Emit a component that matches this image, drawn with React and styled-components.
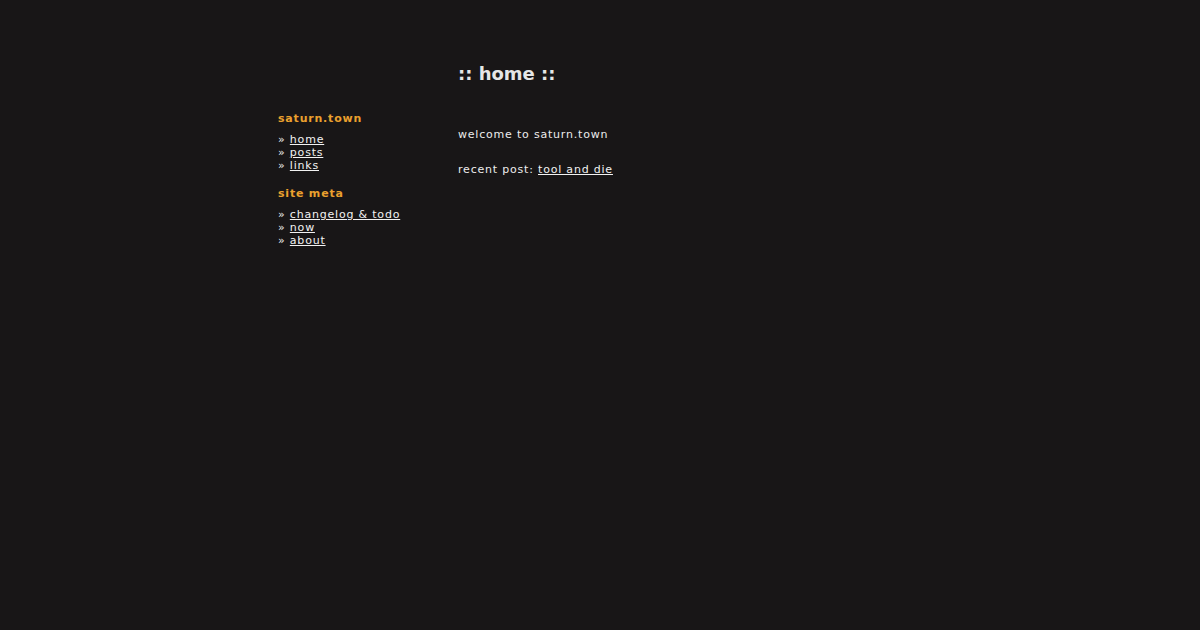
import React from 'react';
import styled, { createGlobalStyle } from 'styled-components';

const GlobalStyle = createGlobalStyle`
  html, body {
    margin: 0;
    padding: 0;
    background: #181617;
  }
  body {
    font-family: "DejaVu Sans", Verdana, sans-serif;
    color: #ececec;
    min-height: 630px;
  }
`;

const Page = styled.div`
  width: 644px;
  margin: 0 auto;
  padding-top: 63px;
`;

const Row = styled.div`
  display: grid;
  grid-template-columns: 180px 1fr;
`;

const Title = styled.h1`
  grid-column: 2;
  margin: 0;
  font-size: 18px;
  line-height: 22px;
  font-weight: bold;
  color: #e6e6e6;
`;

const Body = styled(Row)`
  margin-top: 27px;
`;

const Sidebar = styled.nav`
  font-size: 11px;
  line-height: 13px;
  letter-spacing: 0.8px;
`;

const SideHeading = styled.h2`
  margin: ${p => (p.$first ? '0' : '15px')} 0 8px;
  font-size: 11px;
  line-height: 13px;
  font-weight: bold;
  color: #eaa02e;
`;

const LinkList = styled.ul`
  list-style: none;
  margin: 0;
  padding: 0;

  li::before {
    content: '» ';
  }
`;

const A = styled.a`
  color: #f2f2f2;
  text-decoration: underline;
`;

const Main = styled.main`
  padding-top: 16px;
  font-size: 11px;
  line-height: 13px;
  letter-spacing: 0.8px;

  p {
    margin: 0 0 22px;
  }
`;

const sections = [
  { title: 'saturn.town', links: ['home', 'posts', 'links'] },
  { title: 'site meta', links: ['changelog & todo', 'now', 'about'] },
];

export default function App() {
  return (
    <>
      <GlobalStyle />
      <Page>
        <Row>
          <Title>:: home ::</Title>
        </Row>
        <Body>
          <Sidebar>
            {sections.map((s, i) => (
              <div key={s.title}>
                <SideHeading $first={i === 0}>{s.title}</SideHeading>
                <LinkList>
                  {s.links.map(l => (
                    <li key={l}>
                      <A href="#">{l}</A>
                    </li>
                  ))}
                </LinkList>
              </div>
            ))}
          </Sidebar>
          <Main>
            <p>welcome to saturn.town</p>
            <p>
              recent post: <A href="#">tool and die</A>
            </p>
          </Main>
        </Body>
      </Page>
    </>
  );
}
